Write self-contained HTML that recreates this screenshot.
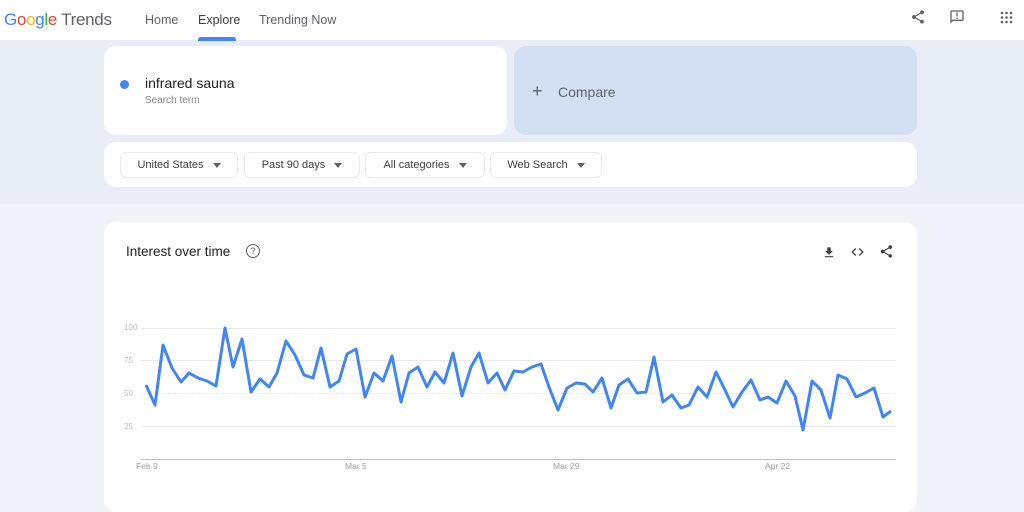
<!DOCTYPE html>
<html><head><meta charset="utf-8"><style>
*{margin:0;padding:0;box-sizing:border-box}
body{width:1024px;height:494px;overflow:hidden;background:#f0f3f9;font-family:"Liberation Sans",Arial,sans-serif;position:relative}
.top{position:absolute;left:0;top:0;width:1024px;height:40px;background:#fff}
.band{position:absolute;left:0;top:40px;width:1024px;height:164px;background:#e8edf7}
.card{position:absolute;background:#fff;border-radius:12px}
.nav{position:absolute;top:13px;font-size:12.5px;color:#5f6368}
.chip{position:absolute;top:152px;height:26px;border:1px solid #e8eaed;border-radius:6px;font-size:11px;color:#3c4043;display:flex;align-items:center;justify-content:center;gap:9px}
.tri{width:0;height:0;border-left:4px solid transparent;border-right:4px solid transparent;border-top:5px solid #5f6368}
.yl{position:absolute;left:124px;font-size:8px;color:#bdc1c6}
.xl{position:absolute;top:461px;font-size:8.5px;color:#9aa0a6}
</style></head><body>
<div class="top"></div>
<div class="band"></div>
<div style="position:absolute;left:4px;top:10px;font-size:17px;letter-spacing:-0.3px"><span style="color:#4285f4">G</span><span style="color:#ea4335">o</span><span style="color:#fbbc05">o</span><span style="color:#4285f4">g</span><span style="color:#34a853">l</span><span style="color:#ea4335">e</span><span style="color:#5f6368"> Trends</span></div>
<div class="nav" style="left:145px">Home</div>
<div class="nav" style="left:198px;color:#3c4043">Explore</div>
<div class="nav" style="left:259px">Trending Now</div>
<div style="position:absolute;left:198px;top:37px;width:38px;height:4px;background:#4285f4;border-radius:3px 3px 0 0"></div>
<svg style="position:absolute;left:910px;top:9px" width="16" height="16" viewBox="0 0 24 24"><path fill="#5f6368" d="M18 16.1c-.8 0-1.4.3-2 .8l-7.1-4.2c.1-.2.1-.5.1-.7s0-.5-.1-.7L16 7.2c.5.5 1.2.8 2 .8 1.7 0 3-1.3 3-3s-1.3-3-3-3-3 1.3-3 3c0 .2 0 .5.1.7L8 9.8C7.5 9.3 6.8 9 6 9c-1.7 0-3 1.3-3 3s1.3 3 3 3c.8 0 1.5-.3 2-.8l7.1 4.2c-.1.2-.1.4-.1.6 0 1.6 1.3 2.9 2.9 2.9s2.9-1.3 2.9-2.9-1.2-2.9-2.8-2.9z"/></svg>
<svg style="position:absolute;left:949px;top:9px" width="16" height="16" viewBox="0 0 24 24"><path fill="#5f6368" d="M20 2H4c-1.1 0-2 .9-2 2v18l4-4h14c1.1 0 2-.9 2-2V4c0-1.1-.9-2-2-2zm0 14H5.2L4 17.2V4h16v12zM11 5h2v6h-2zm0 8h2v2h-2z"/></svg>
<svg style="position:absolute;left:1000px;top:11px" width="13" height="13" viewBox="0 0 13 13" fill="#5f6368"><circle cx="2" cy="2" r="1.3"/><circle cx="6.5" cy="2" r="1.3"/><circle cx="11" cy="2" r="1.3"/><circle cx="2" cy="6.5" r="1.3"/><circle cx="6.5" cy="6.5" r="1.3"/><circle cx="11" cy="6.5" r="1.3"/><circle cx="2" cy="11" r="1.3"/><circle cx="6.5" cy="11" r="1.3"/><circle cx="11" cy="11" r="1.3"/></svg>

<div class="card" style="left:104px;top:46px;width:403px;height:89px"></div>
<div style="position:absolute;left:120px;top:80px;width:9px;height:9px;border-radius:50%;background:#4285f4"></div>
<div style="position:absolute;left:145px;top:75px;font-size:14px;color:#202124">infrared sauna</div>
<div style="position:absolute;left:145px;top:95px;font-size:10px;color:#80868b">Search term</div>
<div class="card" style="left:514px;top:46px;width:403px;height:89px;background:#d3e0f3"></div>
<div style="position:absolute;left:532px;top:81px;font-size:18px;color:#5f6368;font-weight:300">+</div>
<div style="position:absolute;left:558px;top:84px;font-size:14px;color:#5f6368">Compare</div>

<div class="card" style="left:104px;top:142px;width:813px;height:45px"></div>
<div class="chip" style="left:120px;width:118px">United States<span class="tri"></span></div>
<div class="chip" style="left:244px;width:116px">Past 90 days<span class="tri"></span></div>
<div class="chip" style="left:365px;width:120px">All categories<span class="tri"></span></div>
<div class="chip" style="left:490px;width:112px">Web Search<span class="tri"></span></div>

<div class="card" style="left:104px;top:222px;width:813px;height:290px"></div>
<div style="position:absolute;left:126px;top:244px;font-size:13.5px;color:#202124">Interest over time</div>
<div style="position:absolute;left:246px;top:244px;width:14px;height:14px;border:1.3px solid #5f6368;border-radius:50%;font-size:9px;color:#5f6368;text-align:center;line-height:12px">?</div>
<svg style="position:absolute;left:822px;top:245px" width="14" height="14" viewBox="0 0 24 24"><path fill="#3c4043" d="M19 9h-4V3H9v6H5l7 7 7-7zM5 18v2h14v-2H5z" transform="translate(0,1)"/></svg>
<svg style="position:absolute;left:850px;top:245px" width="15" height="14" viewBox="0 0 24 24"><path fill="none" stroke="#3c4043" stroke-width="2.2" d="M9 6l-6 6 6 6M15 6l6 6-6 6"/></svg>
<svg style="position:absolute;left:879px;top:244px" width="15" height="15" viewBox="0 0 24 24"><path fill="#3c4043" d="M18 16.1c-.8 0-1.4.3-2 .8l-7.1-4.2c.1-.2.1-.5.1-.7s0-.5-.1-.7L16 7.2c.5.5 1.2.8 2 .8 1.7 0 3-1.3 3-3s-1.3-3-3-3-3 1.3-3 3c0 .2 0 .5.1.7L8 9.8C7.5 9.3 6.8 9 6 9c-1.7 0-3 1.3-3 3s1.3 3 3 3c.8 0 1.5-.3 2-.8l7.1 4.2c-.1.2-.1.4-.1.6 0 1.6 1.3 2.9 2.9 2.9s2.9-1.3 2.9-2.9-1.2-2.9-2.8-2.9z"/></svg>

<div class="yl" style="top:323px">100</div>
<div class="yl" style="top:356px">75</div>
<div class="yl" style="top:389px">50</div>
<div class="yl" style="top:422px">25</div>
<svg style="position:absolute;left:0;top:0" width="1024" height="494">
<g stroke="#e8eaed" stroke-width="1"><line x1="141" y1="328.5" x2="896" y2="328.5"/><line x1="141" y1="360.5" x2="896" y2="360.5"/><line x1="141" y1="393.5" x2="896" y2="393.5" stroke-dasharray="2 1"/><line x1="141" y1="426.5" x2="896" y2="426.5"/></g>
<line x1="141" y1="459.5" x2="896" y2="459.5" stroke="#bdc1c6" stroke-width="1"/>
<polyline fill="none" stroke="#4285f4" stroke-width="3" stroke-linejoin="round" points="146,385 155,405 163,345 172,368 181,382 189,373 198,378 207,381 216,386 225,328 233,367 242,339 251,392 260,379 269,387 277,373 286,341 295,355 304,375 313,378 321,348 330,387 339,381 347,354 356,349 365,397 374,373 383,381 392,356 401,402 409,373 418,367 427,387 435,372 444,383 453,353 462,396 471,367 479,353 488,383 497,373 505,390 514,371 523,372 532,367 541,364 549,387 558,410 567,388 576,383 585,384 593,392 602,378 611,408 619,385 628,379 637,393 646,392 654,357 663,402 672,395 681,408 689,405 698,387 707,397 716,372 725,390 733,407 742,392 751,380 760,400 768,397 777,403 786,381 795,396 803,430 812,381 821,390 830,418 838,375 847,379 856,397 865,393 874,388 883,417 891,411"/>
</svg>
<div class="xl" style="left:136px">Feb 9</div>
<div class="xl" style="left:345px">Mar 5</div>
<div class="xl" style="left:553px">Mar 29</div>
<div class="xl" style="left:765px">Apr 22</div>
</body></html>
